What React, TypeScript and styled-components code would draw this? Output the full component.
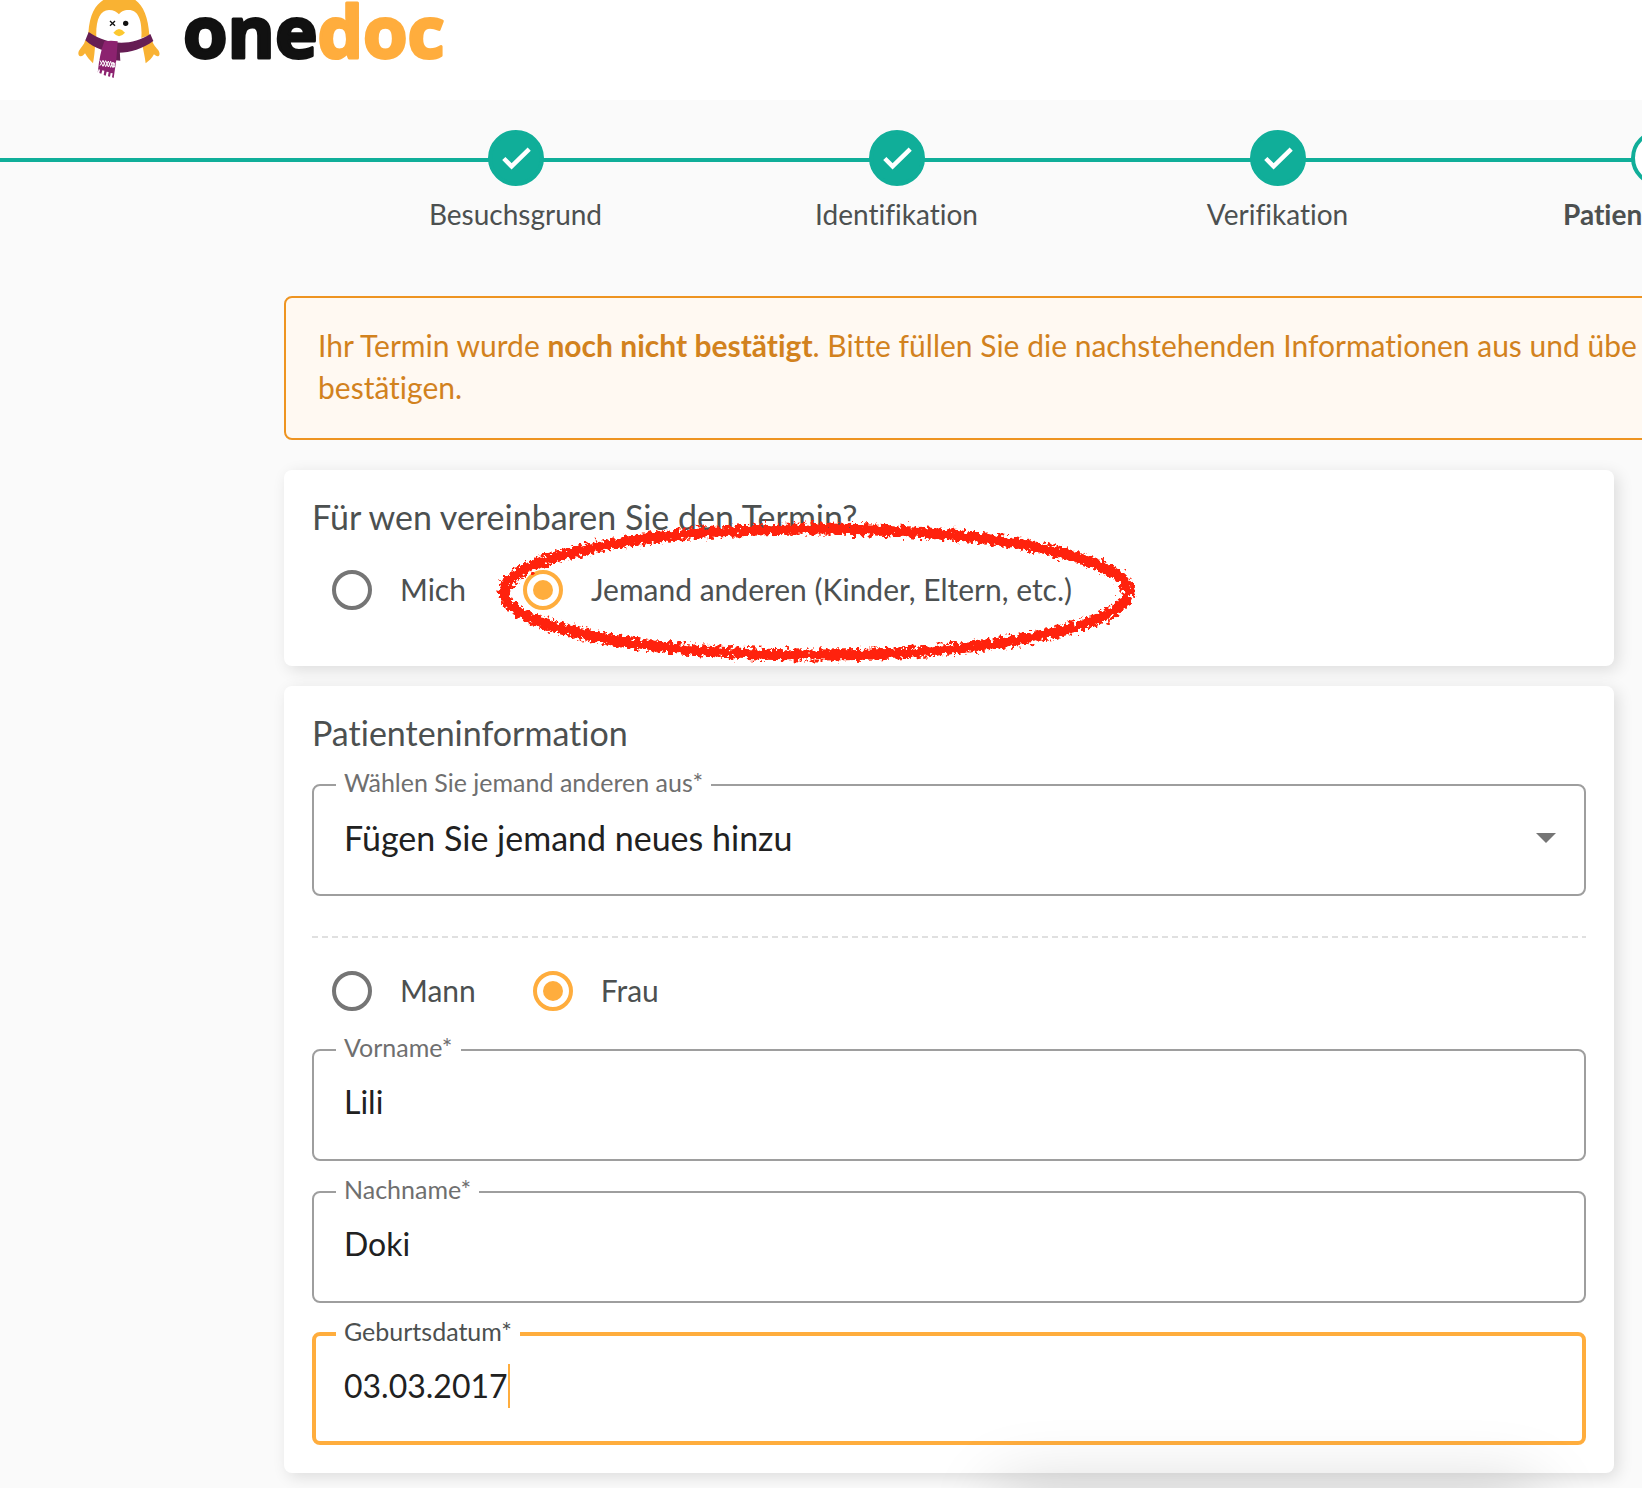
import React from 'react';
import styled, { createGlobalStyle } from 'styled-components';

const color = {
  teal: '#10ae99',
  orange: '#ffad3d',
  text: '#4c5050',
  muted: '#6f6f6f',
  line: '#9e9e9e',
  ink: '#212121',
};

const GlobalStyle = createGlobalStyle`
  *, *::before, *::after { box-sizing: border-box; }
  body {
    margin: 0;
    background: #fafafa;
    color: ${color.text};
    font-family: Lato, "Open Sans", sans-serif;
    font-size: 30px;
    line-height: 40px;
    font-variant-ligatures: none;
  }
  input, select { font: inherit; }
`;

const Page = styled.div`
  position: relative;
  overflow: hidden;
  min-height: 100vh;
`;

const Header = styled.header`
  height: 100px;
  padding-left: 77px;
  background: #fff;
`;

const Brand = styled.a`
  display: inline-flex;
  align-items: flex-start;
  gap: 22px;
  text-decoration: none;
`;

const Wordmark = styled.svg`
  width: 280px;
  height: 80px;
  overflow: visible;
  font-family: "Open Sans", sans-serif;
  font-size: 72px;
  font-weight: 700;
  stroke-width: 3px;
  stroke-linejoin: round;
`;

const WordmarkPart = styled.tspan<{ $color: string }>`
  fill: ${(p) => p.$color};
  stroke: ${(p) => p.$color};
`;

const Stepper = styled.ol`
  position: relative;
  display: flex;
  margin: 0;
  padding: 30px 0 0 325px;
  list-style: none;

  &::before {
    content: '';
    position: absolute;
    left: 0;
    right: 0;
    top: 58px;
    height: 4px;
    background: ${color.teal};
  }
`;

const Step = styled.li<{ $current?: boolean }>`
  position: relative;
  flex: 0 0 381px;
  display: flex;
  flex-direction: column;
  align-items: center;
  gap: 12px;
  font-size: 28px;
  line-height: 32px;
  font-weight: ${(p) => (p.$current ? 700 : 400)};
`;

const StepDot = styled.span<{ $current?: boolean }>`
  display: grid;
  place-items: center;
  width: 56px;
  height: 56px;
  border: 4px solid ${color.teal};
  border-radius: 50%;
  background: ${(p) => (p.$current ? '#fff' : color.teal)};
`;

const Main = styled.main`
  display: flex;
  flex-direction: column;
  padding: 66px 28px 15px 284px;
`;

const Notice = styled.p`
  margin: 0 -40px 30px 0;
  padding: 26px 32px 30px;
  border: 2px solid #ee9421;
  border-radius: 8px;
  background: #fff9f2;
  color: #d2821e;
  line-height: 42px;
  white-space: nowrap;
`;

const Card = styled.section`
  position: relative;
  padding: 27px 28px 28px;
  border-radius: 8px;
  background: #fff;
  box-shadow: 4px 4px 16px rgba(0, 0, 0, 0.12);

  & + & {
    margin-top: 20px;
  }
`;

const Title = styled.h2`
  margin: 0;
  font-size: 34px;
  line-height: 40px;
  font-weight: 400;
`;

const RadioRow = styled.div<{ $bottom: number }>`
  display: flex;
  gap: 57px;
  padding: 33px 20px ${(p) => p.$bottom}px;
`;

const RadioLabel = styled.label`
  display: flex;
  align-items: flex-start;
  gap: 28px;
  height: 40px;
  line-height: 38px;
`;

const Radio = styled.input`
  appearance: none;
  display: grid;
  place-content: center;
  width: 40px;
  height: 40px;
  margin: 0;
  border: 4px solid #757575;
  border-radius: 50%;

  &:checked {
    border-color: ${color.orange};
  }

  &:checked::before {
    content: '';
    width: 20px;
    height: 20px;
    border-radius: 50%;
    background: ${color.orange};
  }
`;

const Marker = styled.svg`
  position: absolute;
  left: 206px;
  top: 45px;
  width: 652px;
  height: 153px;
  pointer-events: none;
`;

const Divider = styled.hr`
  height: 2px;
  margin: 40px 0 0;
  border: 0;
  background: repeating-linear-gradient(90deg, #e0e0e0 0 6px, transparent 6px 10px);
`;

const Fields = styled.div<{ $top: number }>`
  display: flex;
  flex-direction: column;
  gap: 19px;
  padding-top: ${(p) => p.$top}px;
`;

const Outline = styled.fieldset<{ $active?: boolean }>`
  min-width: 0;
  margin: 0;
  padding: 0 ${(p) => (p.$active ? '20px 34px' : '22px 36px')};
  border: ${(p) => (p.$active ? `4px solid ${color.orange}` : `2px solid ${color.line}`)};
  border-radius: 8px;
`;

const Legend = styled.legend<{ $active?: boolean }>`
  padding: 0 8px 6px;
  color: ${(p) => (p.$active ? color.text : color.muted)};
  font-size: 25px;
  line-height: 18px;
`;

const Control = styled.div<{ $select?: boolean }>`
  position: relative;
  display: flex;
  align-items: center;
  padding: ${(p) => (p.$select ? '20px 6px 0 8px' : '18px 8px 0')};
  height: 61px;
  color: ${color.ink};
  font-size: ${(p) => (p.$select ? 34 : 32)}px;
`;

const TextInput = styled.input<{ $fit?: boolean }>`
  flex: ${(p) => (p.$fit ? '0 0 auto' : '1')};
  field-sizing: ${(p) => (p.$fit ? 'content' : 'fixed')};
  min-width: 0;
  height: 40px;
  padding: 0;
  border: 0;
  outline: 0;
  background: transparent;
  color: inherit;
`;

const Select = styled.select`
  appearance: none;
  flex: 1;
  height: 40px;
  padding: 0;
  border: 0;
  outline: 0;
  background: transparent;
  color: inherit;
`;

const Caret = styled.span`
  width: 2px;
  height: 44px;
  background: ${color.orange};
`;

const Arrow = styled.svg`
  width: 20px;
  height: 10px;
  margin-left: -20px;
  pointer-events: none;
`;

const Popup = styled.div`
  position: absolute;
  left: 1000px;
  top: 100%;
  width: 535px;
  height: 80px;
  box-shadow: 0 0 70px rgba(0, 0, 0, 0.18);
`;

const Penguin = () => (
  <svg width="84" height="80" viewBox="50 0 252 240" aria-hidden="true">
    <path fill="#fff" d="M100 20H250V150H100z" />
    <path
      fill="#f9b233"
      d="M84 100C88 40 106 14 132 -2H222C248 14 264 52 267 106L243 114C246 70 238 30 205 30C190 30 180 36 176 43C170 36 160 30 146 30C118 30 106 62 108 112Z"
    />
    <path
      fill="#f9b233"
      d="M75 120L104 132C104 152 101 172 98 190C90 182 80 172 74 160C71 164 66 170 60 169C53 166 53 158 56 152C62 142 72 134 75 120Z"
    />
    <path
      fill="#f9b233"
      d="M276 122L246 134C249 152 254 172 256 190C266 182 276 174 281 163C285 167 290 170 295 168C299 164 298 158 295 152C288 142 279 136 276 122Z"
    />
    <path fill="#fcc82f" d="M159 98Q168 88 176 87Q185 88 194 98Q185 108 176 109Q168 108 159 98Z" />
    <path stroke="#111" strokeWidth="4" d="M149 63L164 77M164 63L149 77" />
    <circle cx="196" cy="70" r="8" fill="#111" />
    <path fill="#661d54" d="M85 96C145 138 215 138 270 102L279 123C215 170 130 170 75 121Z" />
    <path fill="#661d54" d="M166 150H178L180 182L166 181Z" />
    <path
      fill="#8c226f"
      d="M132 124Q152 121 172 124Q170 180 160 234L155 232L157 220L151 219L149 230L143 229L145 216L139 215L136 227L130 225L132 212L126 211L123 221L117 219L119 209L115 208L112 218Q118 160 132 124Z"
    />
    <path
      fill="none"
      stroke="#fff"
      strokeWidth="3"
      d="M119 181L128 199L136 182L144 201L151 184L158 203L164 188M119 197L128 181L136 200L144 183L151 202L158 186L163 202"
    />
  </svg>
);

const Check = () => (
  <svg width="32" height="32" viewBox="0 0 32 32" aria-hidden="true">
    <path d="M3.8 16.5L11.6 24.3L29.2 7.2" fill="none" stroke="#fff" strokeWidth="4.5" />
  </svg>
);

const Highlight = () => (
  <Marker viewBox="0 0 652 153" aria-hidden="true">
    <defs>
      <filter id="crayon" x="-5%" y="-10%" width="110%" height="120%">
        <feTurbulence type="fractalNoise" baseFrequency="0.24" numOctaves="3" seed="4" result="noise" />
        <feDisplacementMap in="SourceGraphic" in2="noise" scale="12" xChannelSelector="R" yChannelSelector="G" />
      </filter>
    </defs>
    <ellipse
      cx="326"
      cy="77"
      rx="312"
      ry="63"
      fill="none"
      stroke="#ff2008"
      strokeWidth="11"
      filter="url(#crayon)"
    />
  </Marker>
);

type FieldProps = { id: string; label: string; value: string; active?: boolean };

const Field = ({ id, label, value, active }: FieldProps) => (
  <Outline $active={active}>
    <Legend $active={active}>
      <label htmlFor={id}>{label}</label>
    </Legend>
    <Control>
      <TextInput id={id} type="text" defaultValue={value} $fit={active} />
      {active && <Caret />}
    </Control>
  </Outline>
);

type ChoiceProps = { name: string; label: string; checked?: boolean };

const Choice = ({ name, label, checked }: ChoiceProps) => (
  <RadioLabel>
    <Radio type="radio" name={name} defaultChecked={checked} />
    {label}
  </RadioLabel>
);

const doneSteps = ['Besuchsgrund', 'Identifikation', 'Verifikation'];

export default function App() {
  return (
    <Page>
      <GlobalStyle />
      <Header>
        <Brand href="#" aria-label="onedoc">
          <Penguin />
          <Wordmark viewBox="0 0 280 80">
            <text y="58">
              <WordmarkPart $color="#111">one</WordmarkPart>
              <WordmarkPart $color={color.orange}>doc</WordmarkPart>
            </text>
          </Wordmark>
        </Brand>
      </Header>
      <Stepper>
        {doneSteps.map((name) => (
          <Step key={name}>
            <StepDot>
              <Check />
            </StepDot>
            {name}
          </Step>
        ))}
        <Step $current aria-current="step">
          <StepDot $current />
          Patientendaten
        </Step>
      </Stepper>
      <Main>
        <Notice>
          Ihr Termin wurde <strong>noch nicht bestätigt</strong>. Bitte füllen Sie die nachstehenden
          Informationen aus und übe
          <br />
          bestätigen.
        </Notice>
        <Card>
          <Title id="for-whom">Für wen vereinbaren Sie den Termin?</Title>
          <RadioRow role="radiogroup" aria-labelledby="for-whom" $bottom={28}>
            <Choice name="for" label="Mich" />
            <Choice name="for" label="Jemand anderen (Kinder, Eltern, etc.)" checked />
          </RadioRow>
          <Highlight />
        </Card>
        <Card>
          <Title>Patienteninformation</Title>
          <Fields $top={20}>
            <Outline>
              <Legend>
                <label htmlFor="person">Wählen Sie jemand anderen aus*</label>
              </Legend>
              <Control $select>
                <Select id="person">
                  <option>Fügen Sie jemand neues hinzu</option>
                </Select>
                <Arrow viewBox="0 0 20 10" aria-hidden="true">
                  <path d="M0 0H20L10 10Z" fill="#757575" />
                </Arrow>
              </Control>
            </Outline>
          </Fields>
          <Divider />
          <RadioRow role="radiogroup" aria-label="Geschlecht" $bottom={0}>
            <Choice name="sex" label="Mann" />
            <Choice name="sex" label="Frau" checked />
          </RadioRow>
          <Fields $top={27}>
            <Field id="first" label="Vorname*" value="Lili" />
            <Field id="last" label="Nachname*" value="Doki" />
            <Field id="birth" label="Geburtsdatum*" value="03.03.2017" active />
          </Fields>
        </Card>
      </Main>
      <Popup />
    </Page>
  );
}
